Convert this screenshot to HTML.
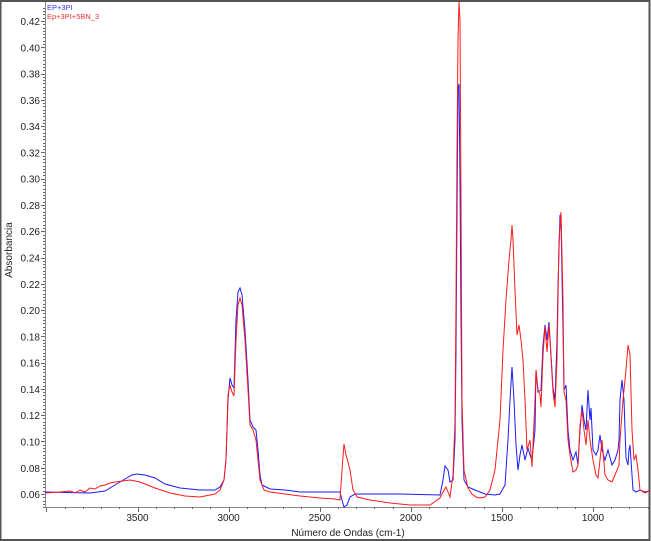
<!DOCTYPE html>
<html><head><style>
html,body{margin:0;padding:0;background:#fff;}
svg{display:block;}
text{font-family:"Liberation Sans",sans-serif;}
</style></head><body>
<svg width="651" height="541" viewBox="0 0 651 541" xmlns="http://www.w3.org/2000/svg">
<rect x="0" y="0" width="651" height="541" fill="#fff"/>
<rect x="0.5" y="1" width="649" height="539" fill="none" stroke="#555" stroke-width="2"/>
<line x1="45.5" y1="2" x2="45.5" y2="507" stroke="#888" stroke-width="1"/>
<line x1="45" y1="507.5" x2="649" y2="507.5" stroke="#888" stroke-width="1"/>
<g stroke="#666" stroke-width="1" id="yt"></g>
<g font-size="10" fill="#222" text-anchor="end" id="yl"></g>
<g font-size="10" fill="#222" text-anchor="middle" id="xl"></g>
<text x="348" y="536" font-size="10" text-anchor="middle" fill="#222">Número de Ondas (cm-1)</text>
<text x="0" y="0" font-size="10" text-anchor="middle" fill="#222" transform="translate(12,250) rotate(-90)">Absorbancia</text>
<text x="47" y="10" font-size="7.5" fill="#3333ee">EP+3PI</text>
<text x="47" y="19" font-size="7.5" fill="#ee3333">Ep+3PI+5BN_3</text>
<polyline fill="none" stroke="#1a1aff" stroke-width="1" points="45,492 90,493 105,491 115,485 125,479 132,475 137,474 145,475 155,478 165,484 180,488 200,490 215,490 220,487 224,480 226,460 228,400 230,378 232,385 234,388 236,320 238,292 240,288 242,295 245,330 248,380 250,420 253,427 256,430 258,450 260,475 262,485 270,489 285,490 300,492 340,492 342,500 344,507 347,505 350,497 355,494 400,494 440,495 443,480 445,466 448,470 450,482 453,480 455,440 456,350 457,214 458,90 459,84 460,180 461,320 462,420 464,480 468,487 475,490 485,494 495,495 500,494 505,485 508,440 510,400 512,367 514,400 516,445 518,470 520,455 522,445 525,460 528,448 530,455 532,460 535,430 536,370 538,392 541,390 543,345 545,325 547,340 549,322 551,355 553,388 555,400 557,340 558,285 560,215 561,220 563,330 564,390 566,385 568,430 570,450 573,460 576,452 578,465 580,430 582,405 584,420 586,430 588,390 590,420 591,408 593,450 596,455 598,450 600,435 602,450 605,460 608,450 612,465 615,460 618,450 619,440 620,400 622,380 624,400 626,458 628,465 629,450 630,445 633,490 636,492 640,490 645,492 649,491"/>
<polyline fill="none" stroke="#ff1a1a" stroke-width="1" points="45,493 60,492 70,491 75,493 80,490 85,492 90,488 95,489 100,486 105,485 110,483 115,482 130,480 140,482 155,488 170,493 185,496 200,497 215,494 220,490 224,480 226,460 228,395 230,385 232,392 234,396 236,340 238,305 240,298 242,305 245,340 248,390 250,425 253,430 256,440 258,460 260,480 264,490 270,492 285,494 300,496 320,498 335,499 340,500 342,470 344,444 346,455 348,462 350,470 353,490 357,497 370,500 390,503 410,505 430,505 440,498 443,492 446,487 448,492 450,497 453,475 455,420 456,300 457,150 458,40 459,2 460,20 461,200 462,400 464,470 468,488 472,494 476,497 480,498 485,497 490,490 495,470 500,420 503,350 506,300 509,260 511,240 512,225 513,240 515,290 517,335 519,325 521,340 523,360 525,400 527,450 530,440 532,467 535,400 536,370 538,390 540,395 541,407 543,355 545,327 547,352 549,325 551,357 553,392 555,407 557,360 559,240 561,212 563,300 564,392 566,400 568,440 570,455 573,472 576,470 578,465 580,425 582,410 584,430 586,445 588,420 590,440 593,460 596,475 598,478 600,460 602,440 605,475 608,480 612,482 615,475 619,465 620,440 623,400 626,370 628,345 630,355 632,430 634,460 636,455 638,470 640,490 645,493 649,491"/>
<script>
var ns="http://www.w3.org/2000/svg";
var yt=document.getElementById("yt"),yl=document.getElementById("yl"),xl=document.getElementById("xl");
function Y(v){return 21+(0.42-v)/0.02*26.28;}
for(var v=0.05;v<=0.4301;v+=0.0025){var y=Math.round(Y(v))+0.5;if(y<3)continue;var l=document.createElementNS(ns,"line");var maj=Math.abs(Math.round(v*100)%2)<0.01&&Math.abs(v*100-Math.round(v*100))<0.01;l.setAttribute("x1",maj?41:43);l.setAttribute("x2",45);l.setAttribute("y1",y);l.setAttribute("y2",y);yt.appendChild(l);}
for(var k=6;k<=42;k+=2){var v=k/100;var t=document.createElementNS(ns,"text");t.setAttribute("x",40);t.setAttribute("y",Y(v)+4);t.textContent=v.toFixed(2);yl.appendChild(t);}
function X(w){return 137.5+(3500-w)*0.1822;}
for(var w=700;w<=4000;w+=100){var x=Math.round(X(w))+0.5;if(x<45||x>649)continue;var l=document.createElementNS(ns,"line");var maj=w%500==0;l.setAttribute("x1",x);l.setAttribute("x2",x);l.setAttribute("y1",507);l.setAttribute("y2",maj?512:509);yt.appendChild(l);}
[3500,3000,2500,2000,1500,1000].forEach(function(w){var t=document.createElementNS(ns,"text");t.setAttribute("x",X(w));t.setAttribute("y",521);t.textContent=w;xl.appendChild(t);});
</script>
</svg>
</body></html>
